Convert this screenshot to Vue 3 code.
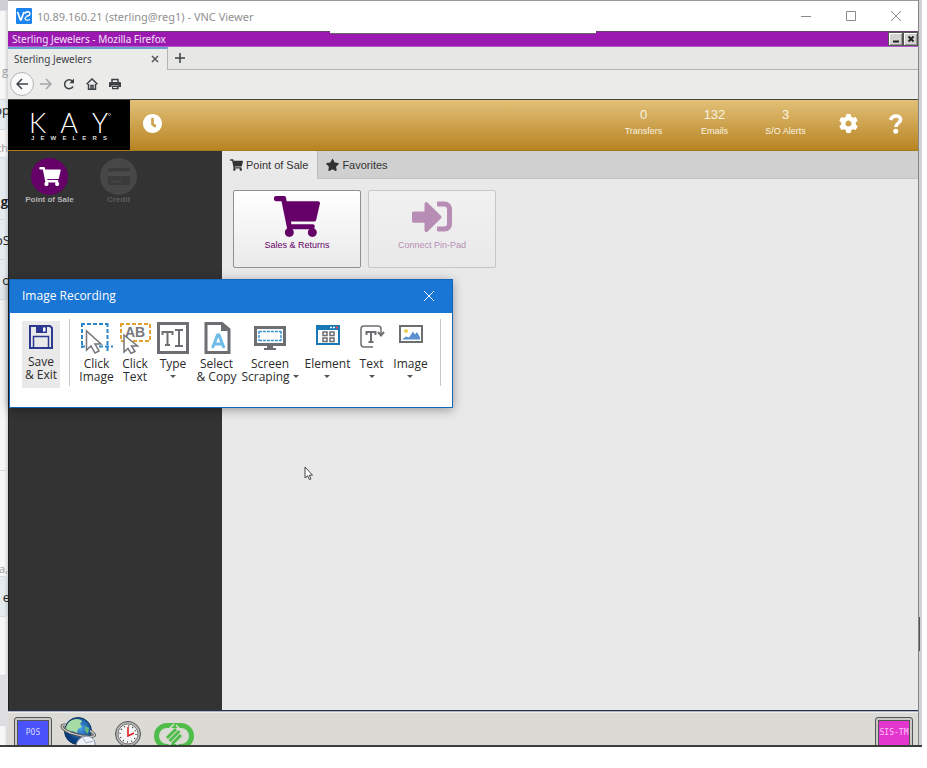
<script setup>
import { h } from 'vue'

const icons = {
  cart: { box: '0 0 576 512', d: 'M528.12 301.319l47.273-208C578.806 78.301 567.391 64 551.99 64H159.208l-9.166-44.81C147.758 8.021 137.93 0 126.529 0H24C10.745 0 0 10.745 0 24v16c0 13.255 10.745 24 24 24h69.883l70.248 343.435C147.325 417.1 136 435.222 136 456c0 30.928 25.072 56 56 56s56-25.072 56-56c0-15.674-6.447-29.835-16.824-40h209.647C430.447 426.165 424 440.326 424 456c0 30.928 25.072 56 56 56s56-25.072 56-56c0-22.172-12.888-41.332-31.579-50.405l5.517-24.276c3.413-15.018-8.002-29.319-23.403-29.319H218.117l-6.545-32h293.145c11.206 0 20.92-7.754 23.403-18.681z' },
  enter: { box: '0 64 512 384', d: 'M416 448h-84c-6.6 0-12-5.4-12-12v-40c0-6.6 5.4-12 12-12h84c17.7 0 32-14.3 32-32V160c0-17.7-14.3-32-32-32h-84c-6.6 0-12-5.4-12-12V76c0-6.6 5.4-12 12-12h84c53 0 96 43 96 96v192c0 53-43 96-96 96zm-47-201L201 79c-15-15-41-4.5-41 17v96H24c-13.3 0-24 10.7-24 24v96c0 13.3 10.7 24 24 24h136v96c0 21.5 26 32 41 17l168-168c9.3-9.4 9.3-24.6 0-34z' },
  star: { box: '20 0 536 512', d: 'M259.3 17.8L194 150.2 47.9 171.5c-26.2 3.8-36.7 36.1-17.7 54.6l105.7 103-25 145.5c-4.5 26.3 23.2 46 46.4 33.7L288 439.6l130.7 68.7c23.2 12.2 50.9-7.4 46.4-33.7l-25-145.5 105.7-103c19-18.5 8.5-50.8-17.7-54.6L382 150.2 316.7 17.8c-11.7-23.6-45.6-23.9-57.4 0z' },
  clock: { box: '8 8 496 496', d: 'M256 8C119 8 8 119 8 256s111 248 248 248 248-111 248-248S393 8 256 8zm57.1 350.1L224.9 294c-3.1-2.3-4.9-5.9-4.9-9.7V116c0-6.6 5.4-12 12-12h48c6.6 0 12 5.4 12 12v137.7l63.5 46.2c5.4 3.9 6.5 11.4 2.6 16.8l-28.2 38.8c-3.9 5.3-11.4 6.5-16.8 2.6z' },
  cog: { box: '8 8 496 496', d: 'M487.4 315.7l-42.6-24.6c4.3-23.2 4.3-47 0-70.2l42.6-24.6c4.9-2.8 7.1-8.6 5.5-14-11.1-35.6-30-67.8-54.7-94.6-3.8-4.1-10-5.1-14.8-2.3L380.8 110c-17.9-15.4-38.5-27.3-60.8-35.1V25.8c0-5.6-3.9-10.5-9.4-11.7-36.7-8.2-74.3-7.8-109.2 0-5.5 1.2-9.4 6.1-9.4 11.7V75c-22.2 7.9-42.8 19.8-60.8 35.1L88.7 85.5c-4.9-2.8-11-1.9-14.8 2.3-24.7 26.7-43.6 58.9-54.7 94.6-1.7 5.4.6 11.2 5.5 14L67.3 221c-4.3 23.2-4.3 47 0 70.2l-42.6 24.6c-4.9 2.8-7.1 8.6-5.5 14 11.1 35.6 30 67.8 54.7 94.6 3.8 4.1 10 5.1 14.8 2.3l42.6-24.6c17.9 15.4 38.5 27.3 60.8 35.1v49.2c0 5.6 3.9 10.5 9.4 11.7 36.7 8.2 74.3 7.8 109.2 0 5.5-1.2 9.4-6.1 9.4-11.7v-49.2c22.2-7.9 42.8-19.8 60.8-35.1l42.6 24.6c4.9 2.8 11 1.9 14.8-2.3 24.7-26.7 43.6-58.9 54.7-94.6 1.5-5.5-.7-11.3-5.6-14.1zM256 336c-44.1 0-80-35.9-80-80s35.9-80 80-80 80 35.9 80 80-35.9 80-80 80z' },
}
const Glyph = (props) =>
  h('svg', { viewBox: icons[props.name].box, fill: 'currentColor', 'aria-hidden': 'true' }, [
    h('path', { d: icons[props.name].d }),
  ])
Glyph.props = ['name']

const stats = [
  { value: 0, label: 'Transfers' },
  { value: 132, label: 'Emails' },
  { value: 3, label: 'S/O Alerts' },
]
const jewelers = [...'JEWELERS']
</script>

<template>
  <div class="page">
    <div class="behind">
      <div class="band dark b-top"></div>
      <div class="band b-a"><span class="faint">g</span></div>
      <div class="band blue b-b"><span>op</span></div>
      <div class="band b-c"><span class="faint">th</span></div>
      <div class="band blue b-d"><b>g</b></div>
      <div class="band blue b-e"><span>oS</span></div>
      <div class="band blue b-f"><span>o</span></div>
      <div class="band b-g"></div>
      <div class="band b-h"><span class="faint">a,</span></div>
      <div class="band blue b-i"><span>e</span></div>
      <div class="band b-j"></div>
      <div class="band gray b-k"></div>
    </div>

    <div class="window">
      <header class="vnc">
        <svg class="vnc-logo" viewBox="0 0 16 16" fill="none" stroke="#fff">
          <rect width="16" height="16" rx="1" fill="#1d84ee" stroke="none" />
          <path d="M1.500 4l3 8h.5L8 4" stroke-width="1.700" />
          <path d="M9 6c0-3 5-3 5 0s-5 1.500-5 4.500c0 2 3 2 5 1M10.500 7.500c2 1 3-.5 3-1.500" stroke-width="1.300" />
        </svg>
        <h1>10.89.160.21 (sterling@reg1) - VNC Viewer</h1>
        <div class="win-buttons">
          <button aria-label="Minimize"><svg viewBox="0 0 10 10"><path d="M0 5.500h10" /></svg></button>
          <button aria-label="Maximize"><svg viewBox="0 0 10 10"><path d="M.5.5h9v9h-9z" /></svg></button>
          <button aria-label="Close"><svg viewBox="0 0 10 10"><path d="M0 0l10 10M10 0L0 10" /></svg></button>
        </div>
      </header>

      <div class="fx-title">
        <span>Sterling Jewelers - Mozilla Firefox</span>
        <div class="notch"></div>
        <div class="fx-buttons">
          <button aria-label="Iconify"><svg viewBox="0 0 8 8"><path d="M1 6.500h6" /></svg></button>
          <button aria-label="Close browser"><svg viewBox="0 0 8 8"><path d="M1.500 1.500l5 5M6.500 1.500l-5 5" /></svg></button>
        </div>
      </div>

      <div class="fx-tabs">
        <div class="fx-tab">
          <span>Sterling Jewelers</span>
          <button aria-label="Close tab"><svg viewBox="0 0 8 8"><path d="M1 1l6 6M7 1L1 7" /></svg></button>
        </div>
        <button class="plus" aria-label="New tab"><svg viewBox="0 0 10 10"><path d="M5 0v10M0 5h10" /></svg></button>
      </div>

      <nav class="fx-nav">
        <button class="back" aria-label="Back"><svg viewBox="0 0 12 12"><path d="M12 6H1.500M6 1L1 6l5 5" /></svg></button>
        <button class="forward" aria-label="Forward"><svg viewBox="0 0 12 12"><path d="M0 6h10.500M6 1l5 5-5 5" /></svg></button>
        <button aria-label="Reload"><svg viewBox="0 0 12 12"><path d="M10 8.500A4.500 4.500 0 1 1 9.500 3.200" /><path d="M11 .5v4.700H6.300z" fill="#3c4144" stroke="none" /></svg></button>
        <button aria-label="Home"><svg viewBox="0 0 12 12"><path d="M.5 6.200L6 1l5.500 5.200M2.500 6v5.200h7V6" /><path d="M5 11V7.500h2V11" /></svg></button>
        <button aria-label="Print"><svg viewBox="0 0 12 12"><path d="M3 4V1.500h6V4M3 10.500h6V8" /><path d="M0 5a1 1 0 0 1 1-1h10a1 1 0 0 1 1 1v4H9.500V7.500h-7V9H0zM3 8h6v3H3z" fill="#3c4144" stroke="none" /><path d="M4 9.500h4" stroke="#ddd" stroke-width="1" /></svg></button>
      </nav>

      <div class="brand">
        <div class="logo">
          <div class="kay"><span>K</span><span>A</span><span>Y</span><i></i></div>
          <div class="jewelers"><span v-for="(c, i) in jewelers" :key="i">{{ c }}</span></div>
        </div>
        <button class="clock" aria-label="Time clock"><Glyph name="clock" /></button>
        <div class="stats">
          <a v-for="s in stats" :key="s.label" href="#"><strong>{{ s.value }}</strong><span>{{ s.label }}</span></a>
        </div>
        <button class="settings" aria-label="Settings"><Glyph name="cog" /></button>
        <button class="help" aria-label="Help">
          <svg viewBox="0 0 14 20" fill="none" stroke="#fff" stroke-width="3.600"><path d="M1.500 6C3 .8 11.600.6 11.600 5.800c0 3.400-4.800 3.400-4.800 7.200" /><circle cx="6.700" cy="17.300" r="2.500" fill="#fff" stroke="none" /></svg>
        </button>
      </div>

      <div class="work">
        <aside class="side">
          <a href="#" class="module"><i class="disc"><Glyph name="cart" /></i><span>Point of Sale</span></a>
          <a href="#" class="module off">
            <i class="disc"><svg viewBox="0 0 22 17"><rect width="22" height="17" rx="1.500" fill="#3b3b3b" /><path d="M0 3.500h22v4.500H0z" fill="#4a4a4a" /><path d="M3 13.500h3M7.500 13.500h6" stroke="#4a4a4a" stroke-width="1.500" /></svg></i>
            <span>Credit</span>
          </a>
        </aside>
        <main class="content">
          <div class="tabs">
            <button class="tab active"><Glyph name="cart" />Point of Sale</button>
            <button class="tab"><Glyph name="star" />Favorites</button>
          </div>
          <div class="tiles">
            <button class="tile"><Glyph name="cart" class="big" /><span>Sales &amp; Returns</span></button>
            <button class="tile" disabled><span class="big"><Glyph name="enter" class="enter" /></span><span>Connect Pin-Pad</span></button>
          </div>
        </main>
      </div>

      <footer class="taskbar">
        <button class="app pos">POS</button>
        <button class="dock" aria-label="Web browser">
          <svg viewBox="0 0 36 36">
            <defs><radialGradient id="globe" cx=".6" cy=".4"><stop offset="0" stop-color="#4aa0ea" /><stop offset="1" stop-color="#073c80" /></radialGradient></defs>
            <circle cx="18" cy="14" r="13.500" fill="url(#globe)" stroke="#123256" />
            <path d="M8 6c4-5 12-5 14-2l-2 3 2 3-4 2-1 4-5-2-5 2-2-4z" fill="#a5dba4" /><path d="M25 9l4 2-1 6-3-3z" fill="#65b37d" />
            <path d="M6 8C-1 7 1 13 14 17s23 3 20 0-3-3-4-3" fill="none" stroke="#555" stroke-width="3" />
            <path d="M6 8C-1 7 1 13 14 17s23 3 20 0-3-3-4-3" fill="none" stroke="#ccc" stroke-width="1.300" />
            <path d="M16 30c0-12 17-15 19-4v10H16z" fill="#edf0f6" stroke="#8892a6" /><path d="M23 21l3 5 7-2" fill="none" stroke="#aab3c4" />
          </svg>
        </button>
        <button class="dock time" aria-label="Clock">
          <svg viewBox="0 0 28 28">
            <circle cx="14" cy="14" r="12.500" fill="#b7b7b7" stroke="#555" /><circle cx="14" cy="14" r="10" fill="#f6f6f6" stroke="#777" />
            <circle cx="14" cy="14" r="8" fill="none" stroke="#444" stroke-width="1.500" stroke-dasharray="1 3.190" />
            <path d="M14 7v9l6-3" fill="none" stroke="#d22" stroke-width="1.600" />
          </svg>
        </button>
        <button class="dock link" aria-label="Connection">
          <svg viewBox="0 0 40 26" fill="none" stroke="#4fbd49">
            <rect x="2.500" y="2.500" width="35" height="21" rx="10.500" stroke-width="5" />
            <path d="M20 1L8 13l10 11M20 25l12-12L22 2" stroke="#dcdbd5" stroke-width="1.500" />
            <path d="M13 15l9-9M15.500 18l10-10M18 21l9-9" stroke-width="3" />
          </svg>
        </button>
        <button class="app sis">SIS-TM</button>
      </footer>

      <svg class="cursor" viewBox="0 0 10 15"><path d="M1 1v11l2.500-2.300 2 4 1.500-.8-1.800-3.700H8.500z" fill="#fff" stroke="#444" /></svg>

      <section class="dialog" role="dialog" aria-labelledby="rec-title">
        <header>
          <h2 id="rec-title">Image Recording</h2>
          <button aria-label="Close recording"><svg viewBox="0 0 12 12"><path d="M1 1l10 10M11 1L1 11" /></svg></button>
        </header>
        <div class="ribbon">
          <button class="tool save">
            <svg class="disk" viewBox="0 0 24 24" fill="none" stroke="#2b3990" stroke-width="2"><path d="M1 1h20l2 2v20H1z" /><path d="M4.500 23V11.500h15V23" stroke-width="1.500" /><path d="M7 1h11v7H7z" fill="#2b3990" stroke="none" /><path d="M14 2.500h2.500v4H14z" fill="#fff" stroke="none" /></svg>
            <span>Save<br />&amp; Exit</span>
          </button>
          <div class="rule"></div>
          <div class="tools">
            <button class="tool">
              <svg viewBox="0 0 32 32" fill="none"><path d="M0 2h26M1 1v25M26.500 1v29M0 24.500h32" stroke="#2a86c8" stroke-width="2" stroke-dasharray="4 2" /><path d="M5.500 9v19l4.500-4 4 7 4-2-4-7h6z" fill="#fff" stroke="#75767a" stroke-width="1.500" /></svg>
              <span>Click<br />Image</span>
            </button>
            <button class="tool">
              <svg viewBox="0 0 32 32" fill="none"><path d="M1 2h30v17H2V1" stroke="#dfa02f" stroke-width="2" stroke-dasharray="4 2" /><text x="6" y="15">AB</text><path d="M5 13v17l4-3.500 3 5 4-2-3.500-5.500h6z" fill="#fff" stroke="#75767a" stroke-width="1.500" /></svg>
              <span>Click<br />Text</span>
            </button>
            <button class="tool">
              <svg viewBox="0 0 32 32" fill="none" stroke="#6d6e71"><rect x="1.500" y="1.500" width="29" height="29" stroke-width="3" /><path d="M5.500 13v-3h10v3M10.500 10v13M8 23h5M18 8h8M18 24h8M22 8v16" stroke-width="2" /></svg>
              <span>Type<i class="caret"></i></span>
            </button>
            <button class="tool">
              <svg viewBox="0 0 32 32" fill="none"><path d="M5 1.500h16l7 6v23H5z" stroke="#6d6e71" stroke-width="3" /><path d="M20 1v8h8" fill="#6d6e71" /><path d="M13.500 26l5-13h1.500l5 13M15 22h9" transform="translate(-2)" stroke="#70bce8" stroke-width="3" /></svg>
              <span>Select<br />&amp; Copy</span>
            </button>
            <button class="tool">
              <svg viewBox="0 0 32 32" fill="none"><rect x="1.500" y="5.500" width="29" height="17" stroke="#6d6e71" stroke-width="3" /><path d="M5 9.500h22M5 18.500h22M5 9v10M27 9v10" stroke="#3c94d3" stroke-width="1.500" stroke-dasharray="3 1" /><path d="M13 23h6v3h3v2H10v-2h3z" fill="#6d6e71" /></svg>
              <span>Screen<br />Scraping<i class="caret side-caret"></i></span>
            </button>
            <button class="tool">
              <svg viewBox="0 0 32 32" fill="none"><rect x="5" y="4" width="22" height="18" stroke="#1678b5" stroke-width="2" /><path d="M4 3h24v5H4z" fill="#1678b5" /><path d="M18 5.500h2M21 5.500h2" stroke="#fff" stroke-width="1.500" /><path d="M24 5.500h2" stroke="#f45" stroke-width="2" /><path d="M11 10h4v3.500h-4zM18 10h4v3.500h-4zM11 16h4v3.500h-4zM18 16h4v3.500h-4z" stroke="#6d6e71" stroke-width="1.500" /></svg>
              <span>Element<i class="caret"></i></span>
            </button>
            <button class="tool">
              <svg viewBox="0 0 32 32" fill="none" stroke="#6d6e71"><path d="M17 25H8a3 3 0 0 1-3-3V7a3 3 0 0 1 3-3h14a3 3 0 0 1 3 3v6" stroke-width="1.500" /><path d="M22 10l3 3.500 3-3.500" stroke-width="2" /><path d="M10.500 13v-3h9v3M15 10v10M12.500 20h5" stroke-width="2" /></svg>
              <span>Text<i class="caret"></i></span>
            </button>
            <button class="tool">
              <svg viewBox="0 0 32 32" fill="none"><rect x="5" y="4" width="22" height="16" stroke="#6d6e71" stroke-width="2" /><path d="M7 17.500l4-3 3 1 4-6 2 3 2-2.500 3 5.500v2z" fill="#5b8fd0" /><circle cx="11" cy="9" r="2" fill="#edcf4e" /></svg>
              <span>Image<i class="caret"></i></span>
            </button>
          </div>
          <div class="rule"></div>
        </div>
      </section>
    </div>
    <div class="edge"><i></i></div>
  </div>
</template>

<style>
body { margin: 0; background: #fff; }
</style>

<style scoped>
* { box-sizing: border-box; }
h1, h2 { margin: 0; font-weight: 400; }
button { padding: 0; border: 0; background: none; font: inherit; color: inherit; cursor: pointer; }
a { color: inherit; text-decoration: none; }
svg { display: block; flex: none; }
.page { display: grid; grid-template-columns: 8px minmax(0, 1fr) 4px; min-height: calc(100vh - 21px); margin: 0 5px 21px 0; border-bottom: 2px solid #3d3d3d; font-family: "Liberation Sans", Arial, sans-serif; }

.behind { display: flex; flex-direction: column; overflow: hidden; background: linear-gradient(90deg, #f7f7f7 50%, #d4d4d4); color: #222; font: 13px "Open Sans", sans-serif; }
.band { display: flex; align-items: center; justify-content: flex-end; border-bottom: 1px solid #d9dcde; }
.band.blue { background: linear-gradient(90deg, #e5ebef 50%, #c8cdd1); }
.band.gray { background: #dfdfe2; }
.band.dark { background: #cfcfd5; }
.band span { margin-right: -2px; }
.band .faint { margin-right: 0; color: #999; font-size: 11px; }
.b-top { height: 11px; }
.b-a { height: 89px; padding-top: 30px; }
.b-b { height: 30px; padding-bottom: 10px; }
.b-c { height: 28px; padding-top: 8px; }
.b-d { height: 62px; padding-top: 24px; }
.b-e { height: 40px; }
.b-f { height: 40px; }
.b-g { height: 171px; }
.b-h { height: 106px; align-items: flex-end; }
.b-i { height: 40px; }
.b-j { height: 59px; }
.b-k { height: 50px; }

.window { position: relative; display: flex; flex-direction: column; border-top: 1px solid #999; background: #e9e9e9; }
.edge { display: flex; flex-direction: column; justify-content: flex-end; padding-bottom: 94px; border-left: 1px solid #858585; background: #d2d2d4; }
.edge i { width: 1px; height: 34px; background: #555; }

.vnc { display: flex; align-items: center; height: 30px; padding-left: 8px; background: #fff; }
.vnc-logo { width: 16px; height: 16px; }
.vnc h1 { flex: 1; padding-left: 5px; font: 11px "Noto Sans", sans-serif; color: #909090; white-space: nowrap; }
.win-buttons { display: flex; }
.win-buttons button { display: grid; place-items: center; width: 45px; height: 29px; }
.win-buttons svg { width: 10px; height: 10px; fill: none; stroke: #8b8b8b; }

.fx-title { position: relative; display: flex; align-items: center; justify-content: space-between; height: 16px; padding-left: 4px; border-top: 1px solid #6a4070; border-bottom: 1px solid #b35bc4; background: #9b19b1; color: #f3e2f6; font: 10px/14px "Noto Sans", sans-serif; }
.fx-buttons { display: flex; align-self: stretch; }
.fx-buttons button { display: grid; place-items: center; width: 15px; border: 1px solid #555; background: #d4d3cf; box-shadow: inset 1px 1px #fff, inset -1px -1px #999; }
.fx-buttons svg { width: 8px; height: 8px; fill: none; stroke: #222; stroke-width: 2; }
.notch { position: absolute; top: -1px; left: calc(50% - 133px); width: 266px; height: 3px; background: #fff; border-bottom: 1px solid #666; }

.fx-tabs { display: flex; height: 23px; background: #e7e7e5; border-bottom: 1px solid #b4b4b4; }
.fx-tab { display: flex; align-items: center; justify-content: space-between; width: 160px; height: 23px; padding: 0 8px 2px 6px; border-top: 2px solid #6a9fd4; border-right: 1px solid #b4b4b4; background: #ebebea; color: #3d4245; font: 10px "Noto Sans", sans-serif; }
.fx-tab svg { width: 8px; height: 8px; fill: none; stroke: #555; stroke-width: 1.5; }
.plus { display: grid; place-items: center; width: 23px; }
.plus svg { width: 10px; height: 10px; fill: none; stroke: #3d4245; stroke-width: 1.5; }
.fx-nav { display: flex; align-items: center; height: 30px; padding: 0 0 2px 2px; border-bottom: 1px solid #44443c; background: #ebebea; }
.fx-nav button { display: grid; place-items: center; width: 23px; height: 24px; }
.fx-nav svg { width: 12px; height: 12px; fill: none; stroke: #3c4144; stroke-width: 1.5; }
.fx-nav .back { width: 24px; border: 1px solid #b5b5b5; border-radius: 50%; background: #fafafa; }
.fx-nav .forward { opacity: .4; }

.brand { display: flex; align-items: flex-start; height: 51px; padding-right: 2px; border-bottom: 1px solid #a87819; background: linear-gradient(#e2c078, #b88422); color: #fff; }
.logo { width: 122px; align-self: stretch; padding: 11px 19px 0 21px; background: #000; }
.kay { position: relative; display: flex; justify-content: space-between; padding-right: 3px; font: 300 27px/24px Lato, sans-serif; }
.kay i { position: absolute; top: 2px; right: 0; width: 3px; height: 3px; border: 1px solid #999; border-radius: 50%; }
.jewelers { display: flex; justify-content: space-between; padding: 0 4px 0 2px; font: 700 6px/7px "Liberation Sans", sans-serif; color: #ddd; }
.clock { display: grid; place-items: center; width: 45px; height: 47px; }
.clock svg { width: 19px; height: 19px; }
.stats { display: grid; grid-template-columns: repeat(3, 71px); margin-left: auto; padding-top: 8px; text-align: center; color: #faf3e2; }
.stats a { display: flex; flex-direction: column; gap: 4px; }
.stats strong { font: 13px/14px "Liberation Sans", sans-serif; }
.stats span { font-size: 9px; line-height: 10px; }
.settings, .help { display: grid; place-items: center; width: 55px; height: 47px; }
.settings svg { width: 19px; height: 19px; }
.help { width: 40px; }
.help svg { width: 14px; height: 20px; }

.work { display: grid; grid-template-columns: 214px minmax(0, 1fr); flex: 1; }
.side { display: flex; align-items: flex-start; padding: 7px 0 0 6px; border-left: 1px solid #1f2026; background: #333; }
.module { display: flex; flex-direction: column; align-items: center; width: 69px; color: #b4b4b4; font-size: 8px; font-weight: 700; line-height: 10px; }
.disc { display: grid; place-items: center; width: 37px; height: 37px; border-radius: 50%; background: #650068; color: #fff; }
.disc svg { width: 22px; height: 19px; }
.off { color: #5c5c5c; }
.off .disc { background: #474747; }
.tabs { display: flex; height: 28px; border-bottom: 1px solid #c2c2c2; background: #d0d0d0; color: #333; }
.tab { display: flex; align-items: center; gap: 3px; height: 28px; padding: 0 9px 0 8px; font-size: 11px; }
.tab svg { width: 13px; height: 12px; }
.tab.active { background: #e9e9e9; border-right: 1px solid #bbb; }
.tiles { display: flex; flex-wrap: wrap; gap: 7px; padding: 11px; }
.tile { display: flex; flex-direction: column; align-items: center; gap: 3px; width: 128px; height: 78px; padding-top: 5px; border: 1px solid #909090; border-radius: 2px; background: linear-gradient(#fff, #eaeaea); color: #650068; font-size: 9px; }
.tile .big { display: grid; place-items: center; width: 46px; height: 41px; }
.tile .enter { width: 40px; height: 31px; }
.tile:disabled { color: #b78db6; border-color: #c6c6c6; background: linear-gradient(#f1f1f1, #e9e9e9); }

.taskbar { display: flex; align-items: flex-start; height: 35px; padding: 6px 5px 0 6px; overflow: hidden; border-top: 1px solid #2d3040; box-shadow: inset 0 1px #aeb4cf, inset 0 2px #eee; background: #dbdad5; }
.app { width: 38px; height: 36px; padding-bottom: 6px; border: 3px solid #c9c9c6; outline: 1px solid #555; outline-offset: -1px; border-radius: 3px; box-shadow: inset 0 0 0 1px #555; font: 8px "DejaVu Sans Mono", monospace; color: #d4d8ff; }
.pos { background: #4a53fa; }
.sis { margin-left: auto; background: #e336ce; color: #ffc5f8; }
.dock svg { width: 36px; height: 36px; }
.dock { margin-left: 8px; }
.time { margin: 3px 0 0 18px; }
.time svg { width: 28px; height: 28px; }
.link { margin: 6px 0 0 12px; }
.link svg { width: 40px; height: 26px; }

.cursor { position: absolute; left: 296px; top: 465px; width: 10px; height: 15px; }

.dialog { position: absolute; left: 1px; top: 278px; width: 444px; border: 1px solid #1467b8; background: #fff; box-shadow: 0 2px 10px rgba(0, 0, 0, .35); font: 12px/13px "Open Sans", sans-serif; color: #2b2b2b; }
.dialog header { display: flex; align-items: center; justify-content: space-between; height: 33px; padding: 0 17px 2px 12px; background: #1a76d4; color: #fff; }
.dialog h2 { font-size: 12px; }
.dialog header svg { width: 12px; height: 12px; fill: none; stroke: #fff; }
.ribbon { display: flex; padding: 6px 0 20px 12px; }
.tool { display: flex; flex-direction: column; align-items: center; }
.tool svg { width: 32px; height: 32px; }
.tool > span { margin-top: 3px; white-space: nowrap; }
.tools { display: grid; grid-template-columns: 39px 38px 38px 49px 58px 57px 31px 47px; align-items: start; padding: 3px 6px 0 7px; }
.save { width: 38px; height: 67px; margin: 2px 9px 0 0; padding-top: 4px; background: #e9e9e9; }
.save .disk { width: 24px; height: 24px; }
.save > span { margin-top: 6px; }
.rule { width: 1px; height: 67px; background: #c8c8c8; }
.ribbon { padding-bottom: 19px; }
.caret { display: block; width: 0; margin: 5px auto 0; border: 3px solid transparent; border-top-color: #555; border-bottom: 0; }
.side-caret { display: inline-block; margin: 0 0 3px 3px; }
.tool text { font: 700 14px "Liberation Sans", sans-serif; fill: #77787b; }
</style>
